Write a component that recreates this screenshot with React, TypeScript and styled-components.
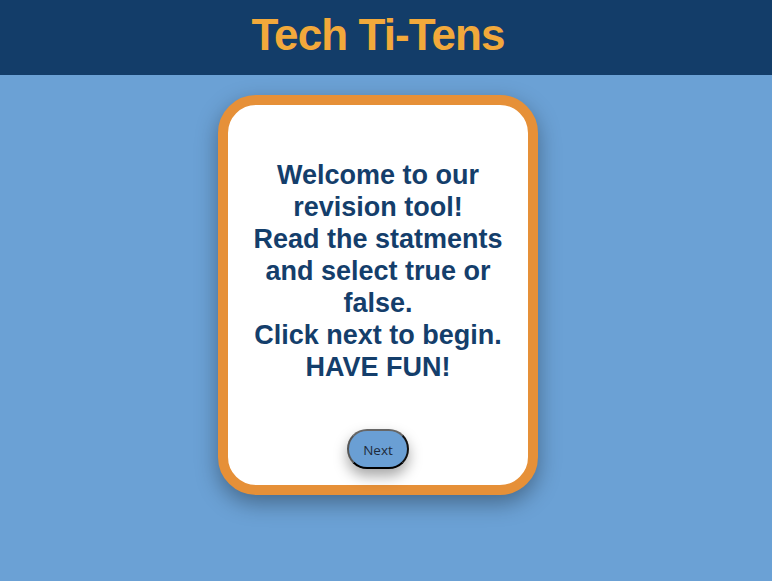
import React from "react";
import styled, { createGlobalStyle } from "styled-components";

const GlobalStyle = createGlobalStyle`
  html, body {
    margin: 0;
    padding: 0;
    background: #6ba1d5;
    font-family: "Liberation Sans", Arial, sans-serif;
  }
`;

const Page = styled.div`
  min-height: 581px;
  background: #6ba1d5;
`;

const Header = styled.header`
  height: 75px;
  background: #133d69;
  display: flex;
  justify-content: center;
  align-items: center;
  padding-right: 16px;
`;

const Title = styled.h1`
  margin: 0;
  font-family: "Liberation Sans", Arial, sans-serif;
  font-weight: 700;
  font-size: 44px;
  letter-spacing: -0.9px;
  color: #f2a93b;
  line-height: 1;
  padding-bottom: 5px;
`;

const Main = styled.main`
  display: flex;
  justify-content: center;
  padding: 20px 16px 0 0;
`;

const Card = styled.section`
  box-sizing: border-box;
  width: 320px;
  height: 400px;
  background: #ffffff;
  border: 10px solid #e69038;
  border-radius: 38px;
  box-shadow: 0 8px 22px rgba(0, 0, 0, 0.35);
  display: flex;
  flex-direction: column;
  align-items: center;
  padding: 54px 10px 16px;
`;

const Message = styled.p`
  margin: 0;
  text-align: center;
  font-family: "Liberation Sans", Arial, sans-serif;
  font-weight: 700;
  font-size: 27px;
  line-height: 32px;
  color: #143e6b;
  white-space: nowrap;
`;

const NextButton = styled.button`
  margin-top: auto;
  box-sizing: border-box;
  width: 62px;
  height: 40px;
  border-radius: 20px;
  background: #6a9fd4;
  border: 2px solid;
  border-color: #666 #111 #000 #555;
  box-shadow: 0 7px 14px rgba(0, 0, 0, 0.35);
  font-family: "Open Sans", "Noto Sans", sans-serif;
  font-size: 13.5px;
  color: #1d2a3a;
  cursor: pointer;
  padding: 1px 0 0;
`;

const lines = [
  "Welcome to our",
  "revision tool!",
  "Read the statments",
  "and select true or",
  "false.",
  "Click next to begin.",
  "HAVE FUN!",
];

export default function App() {
  return (
    <>
      <GlobalStyle />
      <Page>
        <Header>
          <Title>Tech Ti-Tens</Title>
        </Header>
        <Main>
          <Card>
            <Message>
              {lines.map((l, i) => (
                <React.Fragment key={i}>
                  {l}
                  {i < lines.length - 1 && <br />}
                </React.Fragment>
              ))}
            </Message>
            <NextButton>Next</NextButton>
          </Card>
        </Main>
      </Page>
    </>
  );
}
